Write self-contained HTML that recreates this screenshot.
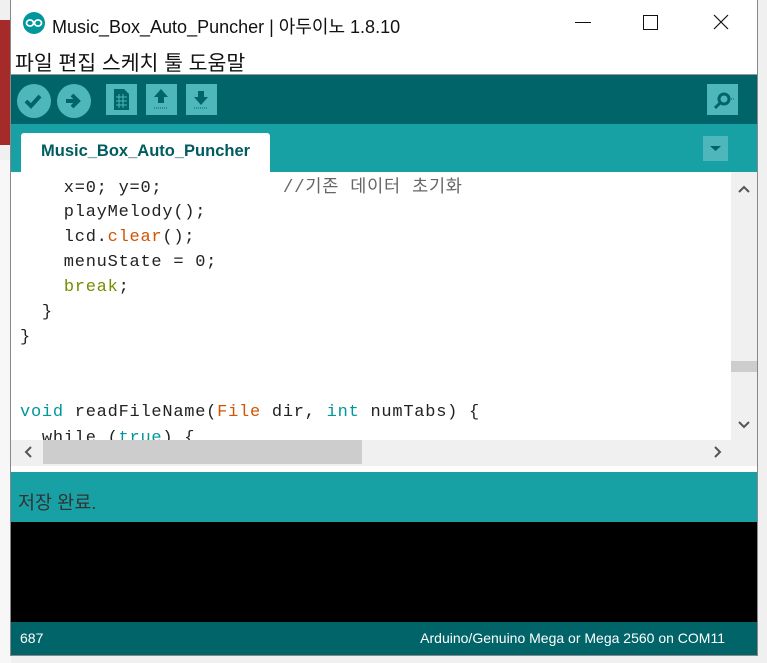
<!DOCTYPE html>
<html><head><meta charset="utf-8"><style>
*{margin:0;padding:0;box-sizing:border-box}
body{width:767px;height:663px;background:#f0f0f0;position:relative;overflow:hidden;font-family:"Liberation Sans","Noto Sans CJK KR",sans-serif}
.abs{position:absolute}
.code{font-family:"Liberation Mono","Noto Sans CJK KR",monospace;font-size:17px;line-height:20px;letter-spacing:0.75px;color:#222;white-space:pre;position:absolute;left:20px}
</style></head><body>
<div class="abs" style="left:0;top:20px;width:11px;height:125px;background:#a52a2a"></div>
<div class="abs" style="left:0;top:160px;width:11px;height:503px;background:#f7f7f7"></div>
<div class="abs" style="left:10px;top:0;width:748px;height:656px;background:#fff;border:1px solid #888;border-top:none"></div>
<!-- title -->
<svg class="abs" style="left:22px;top:11px" width="24" height="24"><circle cx="12" cy="12" r="11" fill="#00979c"/><ellipse cx="8" cy="12" rx="3.5" ry="3" fill="none" stroke="#fff" stroke-width="1.8"/><ellipse cx="16" cy="12" rx="3.5" ry="3" fill="none" stroke="#fff" stroke-width="1.8"/></svg>
<div class="abs" style="left:52px;top:13px;font-size:18px;color:#111">Music_Box_Auto_Puncher | 아두이노 1.8.10</div>
<div class="abs" style="left:575px;top:22px;width:16px;height:1px;background:#111"></div>
<div class="abs" style="left:643px;top:15px;width:15px;height:15px;border:1px solid #111"></div>
<svg class="abs" style="left:713px;top:14px" width="16" height="16"><path d="M1 1L15 15M15 1L1 15" stroke="#111" stroke-width="1.2"/></svg>
<div class="abs" style="left:15px;top:46px;font-size:20.5px;color:#111">파일 편집 스케치 툴 도움말</div>
<div class="abs" style="left:11px;top:74px;width:746px;height:1px;background:#999"></div>
<!-- toolbar -->
<div class="abs" style="left:11px;top:75px;width:746px;height:49px;background:#006468"></div>
<svg class="abs" style="left:11px;top:75px" width="746" height="49">
<circle cx="23" cy="26" r="17" fill="#4db7bb"/><path d="M15 26l5 5 9-10" stroke="#006468" stroke-width="4" fill="none"/>
<circle cx="63" cy="26" r="17" fill="#4db7bb"/><path d="M55 26h10M61 20l6 6-6 6" stroke="#006468" stroke-width="4" fill="none"/>
<rect x="95" y="9" width="31" height="31" fill="#4db7bb"/><path d="M103 14h10l5 5v16h-15z" fill="#006468"/><path d="M105 22h11M105 26h11M105 30h11M108 19v14M112 19v14" stroke="#4db7bb" stroke-width="1"/>
<rect x="135" y="9" width="31" height="31" fill="#4db7bb"/><path d="M150 14l-7 8h4v6h6v-6h4z" fill="#006468"/><path d="M143 33h14" stroke="#006468" stroke-dasharray="1 1"/>
<rect x="175" y="9" width="31" height="31" fill="#4db7bb"/><path d="M190 30l-7-8h4v-6h6v6h4z" fill="#006468"/><path d="M183 33h14" stroke="#006468" stroke-dasharray="1 1"/>
<rect x="696" y="9" width="31" height="31" fill="#4db7bb"/><circle cx="713" cy="24" r="5" fill="none" stroke="#006468" stroke-width="3"/><path d="M709 28l-5 5" stroke="#006468" stroke-width="3"/><path d="M720 24h4" stroke="#006468" stroke-dasharray="1 1"/>
</svg>
<!-- tabs -->
<div class="abs" style="left:11px;top:124px;width:746px;height:48px;background:#17a1a5"></div>
<div class="abs" style="left:21px;top:133px;width:249px;height:40px;background:#fff;border-radius:3px 3px 0 0"></div>
<div class="abs" style="left:41px;top:142px;font-size:16.5px;font-weight:bold;color:#005c5f">Music_Box_Auto_Puncher</div>
<div class="abs" style="left:703px;top:136px;width:25px;height:25px;background:#4db7bb"></div>
<svg class="abs" style="left:703px;top:136px" width="25" height="25"><path d="M7 10h11l-5.5 5z" fill="#006468"/></svg>
<!-- editor -->
<div class="code" style="top:178px">    x=0; y=0;           <span style="color:#666;font-size:17.5px">//기존 데이터 초기화</span></div>
<div class="code" style="top:203px">    playMelody();</div>
<div class="code" style="top:228px">    lcd.<span style="color:#d35400">clear</span>();</div>
<div class="code" style="top:253px">    menuState = 0;</div>
<div class="code" style="top:278px">    <span style="color:#728e00">break</span>;</div>
<div class="code" style="top:303px">  }</div>
<div class="code" style="top:328px">}</div>
<div class="code" style="top:403px"><span style="color:#00979c">void</span> readFileName(<span style="color:#d35400">File</span> dir, <span style="color:#00979c">int</span> numTabs) {</div>
<div class="abs" style="left:11px;top:429px;width:720px;height:11px;overflow:hidden"><div class="code" style="top:0;left:9px">  while (<span style="color:#00979c">true</span>) {</div></div>
<div class="abs" style="left:731px;top:172px;width:26px;height:268px;background:#f0f0f0"></div>
<div class="abs" style="left:731px;top:361px;width:26px;height:11px;background:#cdcdcd"></div>
<svg class="abs" style="left:731px;top:172px" width="26" height="268"><path d="M8 20l5-5 5 5M8 250l5 5 5-5" stroke="#555" stroke-width="2" fill="none"/></svg>
<div class="abs" style="left:11px;top:440px;width:746px;height:26px;background:#f0f0f0"></div>
<div class="abs" style="left:43px;top:440px;width:319px;height:24px;background:#cdcdcd"></div>
<svg class="abs" style="left:11px;top:440px" width="746" height="26"><path d="M20 7l-5 5 5 5M704 7l5 5-5 5" stroke="#555" stroke-width="2" fill="none"/></svg>
<!-- status -->
<div class="abs" style="left:11px;top:472px;width:746px;height:50px;background:#17a1a5"></div>
<div class="abs" style="left:18px;top:489px;font-size:18.5px;color:#333">저장 완료.</div>
<div class="abs" style="left:11px;top:522px;width:746px;height:100px;background:#000"></div>
<div class="abs" style="left:11px;top:622px;width:746px;height:33px;background:#006468"></div>
<div class="abs" style="left:20px;top:630px;font-size:14px;color:#fff">687</div>
<div class="abs" style="right:42px;top:630px;font-size:14px;color:#fff">Arduino/Genuino Mega or Mega 2560 on COM11</div>
</body></html>
